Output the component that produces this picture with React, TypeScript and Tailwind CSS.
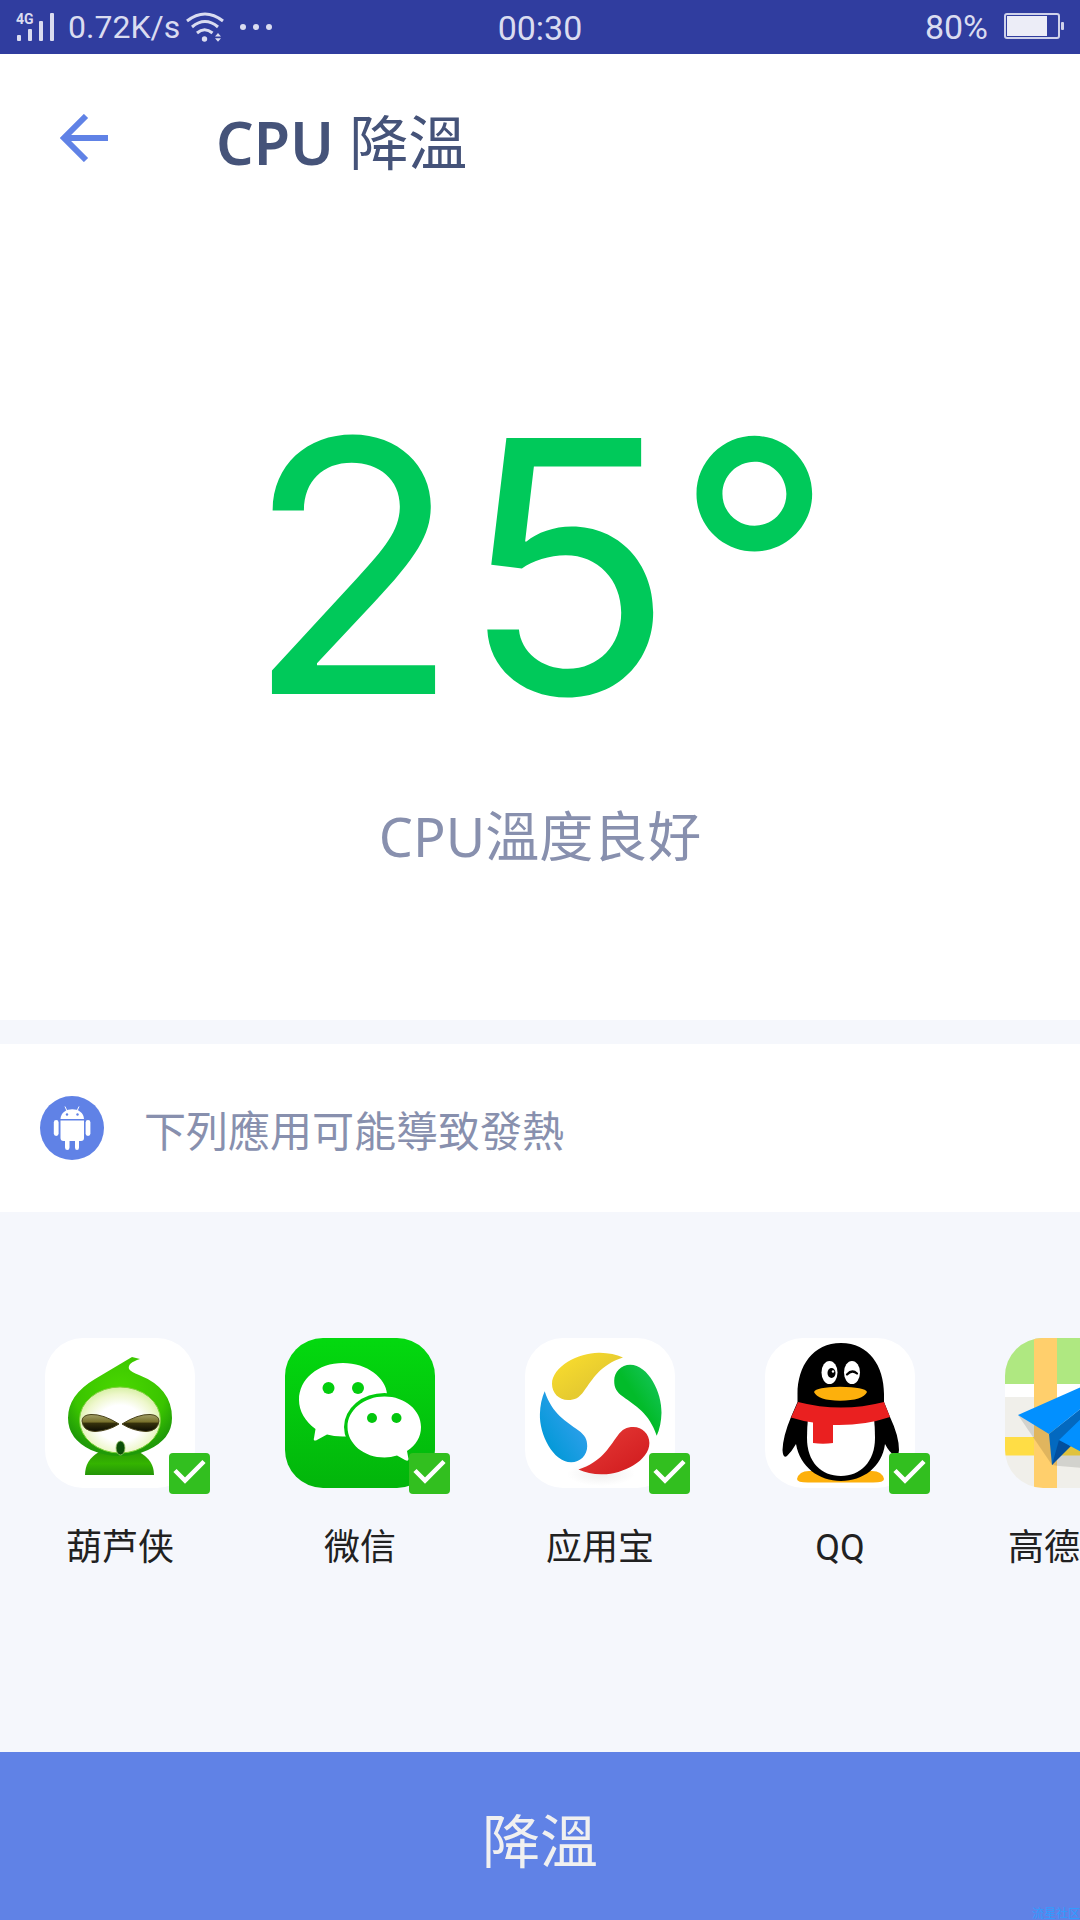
import { useState } from "react";
import type { ReactNode } from "react";

function SignalIcon() {
  return (
    <div className="relative h-7 w-[38px]">
      <span className="absolute top-0 left-0 text-[14px] leading-3 font-bold">4G</span>
      <svg viewBox="0 0 38 28" className="h-7 w-[38px]" fill="currentColor" aria-hidden="true">
        <rect x="1" y="22" width="4" height="6" rx="1" />
        <rect x="12" y="16" width="4" height="12" rx="1" />
        <rect x="23" y="8" width="4" height="20" rx="1" />
        <rect x="34" y="0" width="4" height="28" rx="1" />
      </svg>
    </div>
  );
}

function WifiIcon() {
  return (
    <svg viewBox="0 0 38 30" className="h-[30px] w-[38px]" fill="none" stroke="currentColor" strokeWidth="3" aria-hidden="true">
      <path d="M1 9Q19-5 37 9" />
      <path d="M6 15Q19 4 32 15" />
      <path d="M11 21Q18.500 14.500 26.500 21" />
      <circle cx="18.500" cy="27" r="2.700" fill="currentColor" stroke="none" />
      <path d="M29 24.500L32 21L35 24.500ZM29 26.200L32 29.700L35 26.200Z" fill="currentColor" stroke="none" />
    </svg>
  );
}

function BatteryIcon() {
  return (
    <svg viewBox="0 0 60 28" className="h-7 w-[60px]" fill="none" aria-hidden="true">
      <rect x="1" y="1" width="54" height="24" rx="2" stroke="#cfd2ea" strokeWidth="2" />
      <rect x="3" y="3" width="40" height="20" fill="#ecedf7" />
      <rect x="57" y="9" width="3" height="8" rx="1" fill="#cfd2ea" />
    </svg>
  );
}

function StatusBar() {
  return (
    <div className="grid h-[54px] grid-cols-[1fr_auto_1fr] items-center bg-[#303d9f] font-['Roboto',sans-serif] text-[34px] leading-[52px] text-[#dadcf0]">
      <div className="flex items-center pl-4">
        <SignalIcon />
        <span className="ml-3.5 text-[32px]">0.72K/s</span>
        <span className="ml-1.5">
          <WifiIcon />
        </span>
        <svg viewBox="0 0 32 6" className="ml-4 h-1.5 w-8" fill="currentColor" aria-hidden="true">
          <circle cx="3" cy="3" r="3" />
          <circle cx="16" cy="3" r="3" />
          <circle cx="29" cy="3" r="3" />
        </svg>
      </div>
      <span className="pt-0.5">00:30</span>
      <div className="flex items-center justify-end gap-4 pr-4">
        <span>80%</span>
        <BatteryIcon />
      </div>
    </div>
  );
}

function AndroidBadge() {
  return (
    <svg viewBox="0 0 64 64" className="size-16" aria-hidden="true">
      <circle cx="32" cy="32" r="32" fill="#6082e6" />
      <g fill="#fff">
        <path d="M20.500 23C21 10 43.500 10 44 23Z" />
        <path d="M20.500 24.500H44V42Q44 45 41 45H39V51.500Q39 54 37 54T35 51.500V45H29.500V51.500Q29.500 54 27.300 54T25 51.500V45H23.500Q20.500 45 20.500 42Z" />
        <rect x="13.800" y="24" width="4.800" height="16" rx="2.400" />
        <rect x="45.600" y="24" width="4.800" height="16" rx="2.400" />
      </g>
      <path d="M25 10.500L27 15M39 10.500L37 15" stroke="#fff" strokeWidth="1" />
      <circle cx="27" cy="18.500" r="1.200" fill="#6082e6" />
      <circle cx="37.500" cy="18.500" r="1.200" fill="#6082e6" />
    </svg>
  );
}

const gourdIcon = (
  <svg viewBox="0 0 150 150" className="size-full" aria-hidden="true">
    <defs>
      <radialGradient id="gourd" cx="0.5" cy="0.35" r="0.62">
        <stop offset="0" stopColor="#4ad800" />
        <stop offset="0.7" stopColor="#3ac400" />
        <stop offset="1" stopColor="#1f9a08" />
      </radialGradient>
      <linearGradient id="gourdBody" x1="0" y1="0" x2="0" y2="1">
        <stop offset="0" stopColor="#2c9a05" />
        <stop offset="0.5" stopColor="#34b400" />
        <stop offset="1" stopColor="#249408" />
      </linearGradient>
      <radialGradient id="gourdFace" cx="0.5" cy="0.55" r="0.55">
        <stop offset="0.5" stopColor="#fff" />
        <stop offset="0.8" stopColor="#eef7cc" />
        <stop offset="1" stopColor="#d6efa4" />
      </radialGradient>
      <linearGradient id="gourdEye" x1="0" y1="0" x2="0" y2="1">
        <stop offset="0" stopColor="#a3a068" />
        <stop offset="0.45" stopColor="#77702a" />
        <stop offset="0.5" stopColor="#37320c" />
        <stop offset="1" stopColor="#0c0c02" />
      </linearGradient>
    </defs>
    <rect width="150" height="150" fill="#fff" />
    <path d="M40 137Q40 122 54 114H94Q109 122 109 137Z" fill="url(#gourdBody)" />
    <path d="M87 19L95 21Q82 25 84 31Q86 34 94 37Q127 50 127 80Q127 101 103 112Q90 118 75 118Q60 118 46 112Q23 101 23 80Q23 57 50 41Z" fill="url(#gourd)" />
    <ellipse cx="75" cy="82" rx="40.500" ry="33" fill="url(#gourdFace)" stroke="#7ccf3a" strokeWidth="1" />
    <g fill="url(#gourdEye)" stroke="#4a431a" strokeWidth="1">
      <path d="M74 86Q58 76 46 76.500Q37 77 37 83Q38 93 50 93.500Q63 93 74 86Z" />
      <path d="M77 86Q93 76 105 76.500Q114 77 114 83Q113 93 101 93.500Q88 93 77 86Z" />
    </g>
    <ellipse cx="75.500" cy="110" rx="4.500" ry="7" fill="#0c4f08" stroke="#9ec86a" strokeWidth="0.800" />
  </svg>
);

const wechatIcon = (
  <svg viewBox="0 0 150 150" className="size-full" aria-hidden="true">
    <defs>
      <linearGradient id="chat" gradientUnits="userSpaceOnUse" x1="0" y1="0" x2="0" y2="150">
        <stop offset="0" stopColor="#03d90f" />
        <stop offset="1" stopColor="#02b50b" />
      </linearGradient>
    </defs>
    <rect width="150" height="150" fill="url(#chat)" />
    <path d="M58 25C82 25 101 40 102 56L61 98.500Q50 99 42 96.500L31 102.500Q28 103 29 100L30.500 91C20 83 14 73 14 62C14 41 33 25 58 25Z" fill="#fff" />
    <ellipse cx="99.500" cy="89" rx="40.500" ry="34" fill="url(#chat)" />
    <path d="M99.500 58.500C120 58.500 136 72 136 89C136 99 131 107 122 113L123.500 121Q123.500 124 120 122L112 117.500Q106 119.500 99.500 119.500C79 119.500 62.500 106 62.500 89C62.500 72 79 58.500 99.500 58.500Z" fill="#fff" />
    <g fill="url(#chat)">
      <circle cx="43.500" cy="50" r="6" />
      <circle cx="73" cy="50" r="6" />
      <circle cx="87" cy="80" r="5" />
      <circle cx="111.500" cy="80" r="5" />
    </g>
  </svg>
);

const PETAL = "M98 19.500Q88 15 75 14.700C55 14 27 28 27 46C27 55 34 62 43 62C50 62 54 60 59 53C68 41 75 27 98 19.500Z";

const appStoreIcon = (
  <svg viewBox="0 0 150 150" className="size-full" aria-hidden="true">
    <defs>
      <linearGradient id="petalYellow" x1="0" y1="0" x2="1" y2="1">
        <stop offset="0.2" stopColor="#f5d92e" />
        <stop offset="0.6" stopColor="#e6cb30" />
      </linearGradient>
      <linearGradient id="petalGreen" x1="0" y1="0" x2="1" y2="1">
        <stop offset="0.15" stopColor="#13c454" />
        <stop offset="0.5" stopColor="#02bb2a" />
      </linearGradient>
      <linearGradient id="petalRed" x1="0" y1="0" x2="1" y2="1">
        <stop offset="0.2" stopColor="#d42022" />
        <stop offset="0.7" stopColor="#e03230" />
      </linearGradient>
      <linearGradient id="petalBlue" x1="0" y1="0" x2="1" y2="1">
        <stop offset="0.2" stopColor="#0499d8" />
        <stop offset="0.7" stopColor="#2d9fea" />
      </linearGradient>
      <radialGradient id="petalShade">
        <stop offset="0" stopColor="#efefef" />
        <stop offset="1" stopColor="#fff" />
      </radialGradient>
    </defs>
    <rect width="150" height="150" fill="#fff" />
    <ellipse cx="76" cy="136" rx="34" ry="12" fill="url(#petalShade)" />
    <path d={PETAL} fill="url(#petalYellow)" />
    <path d={PETAL} fill="url(#petalGreen)" transform="rotate(90 75.700 75.500)" />
    <path d={PETAL} fill="url(#petalRed)" transform="rotate(180 75.700 75.500)" />
    <path d={PETAL} fill="url(#petalBlue)" transform="rotate(270 75.700 75.500)" />
  </svg>
);

const qqIcon = (
  <svg viewBox="0 0 150 150" className="size-full" aria-hidden="true">
    <rect width="150" height="150" fill="#fff" />
    <path d="M32 141Q34 133 44 133H107Q117 133 119 141Q119 144.500 108 144.500H43Q32 144.500 32 141Z" fill="#fdb00c" />
    <path d="M76 5C104 5 119 28 119 56V64L125 79Q134 98 134 112Q133 121 130 118Q124 114 120 106C117 129 98 143 76 143C54 143 35 129 31 106Q27 113 22 118Q18 121 17.500 112Q18 98 26 79L32.500 64V56C32.500 28 48 5 76 5Z" fill="#000" />
    <path d="M43 80H109Q110 90 110 100C110 124 95 138 76 138C56 138 42 124 42 100Q42 90 43 80Z" fill="#fff" />
    <path d="M33 64Q76 75 119 64L125 79Q98 88 68 87V105Q58 106.500 48 105V84.500Q37 83 26 79.500Z" fill="#ea2020" />
    <ellipse cx="64.500" cy="34.500" rx="8" ry="11.500" fill="#fff" />
    <ellipse cx="87" cy="34.500" rx="8" ry="11.500" fill="#fff" />
    <ellipse cx="66.500" cy="35" rx="4" ry="5" fill="#000" />
    <circle cx="68" cy="33.500" r="1.200" fill="#fff" />
    <path d="M82 36.500Q87 31 92 35.500" fill="none" stroke="#000" strokeWidth="2.200" strokeLinecap="round" />
    <path d="M49 54Q51 49 75 48.700Q100 49 102 54Q98 62.500 75 62.700Q53 62.500 49 54Z" fill="#fdb00c" />
  </svg>
);

const mapIcon = (
  <svg viewBox="0 0 150 150" className="size-full" aria-hidden="true">
    <rect width="150" height="150" fill="#f0efea" />
    <rect width="150" height="46" fill="#afe881" />
    <rect y="46" width="150" height="13" fill="#fff" />
    <rect y="99" width="150" height="18.500" fill="#ffdd45" />
    <rect x="29" width="23" height="150" fill="#ffcf6c" />
    <path d="M13 77L47 127L54 128L90 131L130 126L110 90Z" fill="#000" opacity="0.12" />
    <path d="M44 96L137 22L47 127Z" fill="#0369c0" />
    <path d="M54 102L47 127L66 108Z" fill="#024f9e" />
    <path d="M13 77L137 22L44 96Z" fill="#0290ff" />
    <path d="M54 102L137 22L112 133Z" fill="#0290ff" />
  </svg>
);

type CoolingApp = { id: string; name: string; icon: ReactNode };

const APPS: CoolingApp[] = [
  { id: "huluxia", name: "葫芦侠", icon: gourdIcon },
  { id: "wechat", name: "微信", icon: wechatIcon },
  { id: "yingyongbao", name: "应用宝", icon: appStoreIcon },
  { id: "qq", name: "QQ", icon: qqIcon },
  { id: "amap", name: "高德地图", icon: mapIcon },
];

function AppItem({ app }: { app: CoolingApp }) {
  const [checked, setChecked] = useState(true);
  return (
    <li className="w-60 shrink-0">
      <label htmlFor={app.id} className="flex flex-col items-center gap-[38px]">
        <span className="relative block size-[150px]">
          <span className="block size-full overflow-hidden rounded-[38px]">{app.icon}</span>
          <span className="absolute -right-[15px] -bottom-1.5 grid size-[41px]">
            <input
              id={app.id}
              type="checkbox"
              checked={checked}
              onChange={(e) => setChecked(e.target.checked)}
              className="peer col-start-1 row-start-1 size-full appearance-none rounded bg-gray-300 checked:bg-[#32bf1f]"
            />
            <svg viewBox="0 0 41 41" className="pointer-events-none invisible col-start-1 row-start-1 size-full peer-checked:visible" fill="none" stroke="#fff" strokeWidth="4.500" aria-hidden="true">
              <path d="M6 17.500L16 27.500L35 8.500" />
            </svg>
          </span>
        </span>
        <span className="text-[36px] leading-[44px] whitespace-nowrap text-[#212121]">{app.name}</span>
      </label>
    </li>
  );
}

export default function App() {
  return (
    <div className="relative flex min-h-screen flex-col overflow-hidden bg-white font-['Roboto','Noto_Sans_CJK_TC',sans-serif]">
      <StatusBar />

      <header className="flex h-[168px] items-center gap-[108px] px-[60px]">
        <button type="button" aria-label="返回" className="text-[#6082e6]">
          <svg viewBox="0 0 48 48" className="size-12" fill="none" stroke="currentColor" strokeWidth="6" aria-hidden="true">
            <path d="M48 24H5M26 2L4 24L26 46" />
          </svg>
        </button>
        <h1 className="pt-2 font-['Noto_Sans','Noto_Sans_CJK_TC',sans-serif] text-[59px] leading-[72px] text-[#455379]">
          <span className="font-semibold">CPU</span> 降溫
        </h1>
      </header>

      <main className="flex flex-1 flex-col">
        <section className="flex h-[798px] flex-col items-center pt-[152px]">
          <p className="font-['Inter',sans-serif] text-[352px] leading-[384px] text-[#00c95a]">25°</p>
          <p className="mt-[42px] font-['Noto_Sans','Noto_Sans_CJK_TC',sans-serif] text-[54px] leading-[72px] text-[#8890ae]">CPU溫度良好</p>
        </section>

        <div className="h-6 bg-[#f5f7fc]" />

        <div className="flex h-[168px] items-center gap-10 px-10">
          <AndroidBadge />
          <h2 className="pt-2.5 text-[42px] leading-[56px] text-[#8890ae]">下列應用可能導致發熱</h2>
        </div>

        <section className="flex-1 bg-[#f5f7fc] pt-[126px]">
          <ul className="flex overflow-x-auto font-['Roboto','Noto_Sans_CJK_SC',sans-serif] [scrollbar-width:none]">
            {APPS.map((app) => (
              <AppItem key={app.id} app={app} />
            ))}
          </ul>
        </section>
      </main>

      <button type="button" className="h-[168px] bg-[#6082e6] pt-3.5 text-[58px] leading-[72px] text-[#f0f0f0]">
        降溫
      </button>
      <span className="absolute right-0 bottom-0 font-['Noto_Sans_CJK_SC',sans-serif] text-[12px] leading-[14px] text-[#2f9dff]">流星社区</span>
    </div>
  );
}
